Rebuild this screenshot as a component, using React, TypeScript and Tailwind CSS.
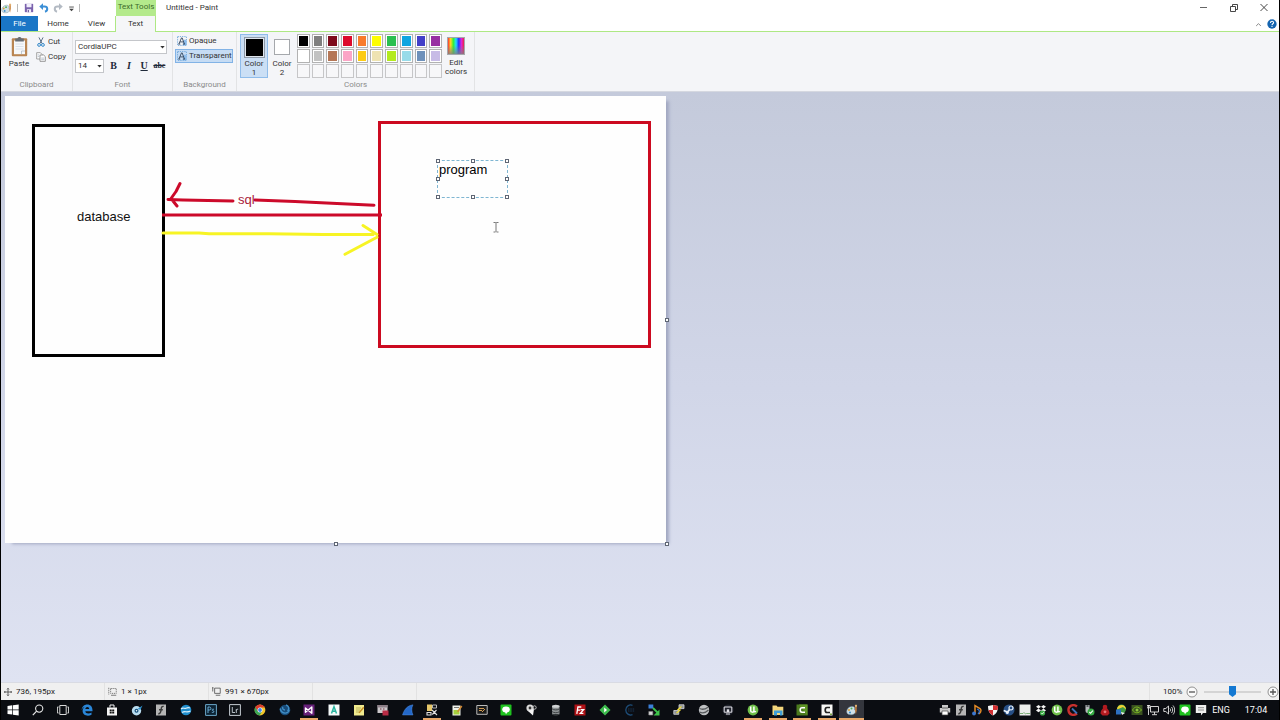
import React from "react";

type Kids = { children: React.ReactNode };

function Icon({ children, size = "size-3", box = "0 0 12 12" }: Kids & { size?: string; box?: string }) {
  return (
    <svg viewBox={box} className={`${size} shrink-0`} fill="none" aria-hidden="true">
      {children}
    </svg>
  );
}

/* ---------- shared drawings ---------- */

const palette = (
  <>
    <path d="M.8 8.200C.4 5.200 3 2.400 6 2.400c2.400 0 3 1.200 2.600 2.600-.3 1.100.9 1 .9 2.600 0 2-2 3.100-4.300 3.100S1 10 .8 8.200z" fill="#cfe0e8" stroke="#7a95a3" strokeWidth=".5" />
    <circle cx="3" cy="6" r="1" fill="#d9a23a" />
    <circle cx="5.500" cy="4.500" r="1" fill="#4fae57" />
    <circle cx="4" cy="8.600" r="1" fill="#3489c9" />
    <path d="M9.200 1.200h1.500v5.200l-.8 4.200-.8-4.200z" fill="#c9803a" />
    <path d="M8.900.8h2.100v2H8.900z" fill="#e0b070" />
  </>
);
const lineBubble = (
  <>
    <rect x=".5" y=".5" width="11" height="11" rx="1" fill="#1fc21f" />
    <ellipse cx="6" cy="5.400" rx="3.800" ry="3" fill="#fff" />
    <path d="M5 7.800l1 2.400 2-3z" fill="#fff" />
  </>
);
const utorrent = (
  <>
    <circle cx="6" cy="6" r="5.400" fill="#6fbf4a" />
    <path d="M3.700 2.500v4.200c0 1.700 2.900 2 3.200.3V2.500M6.900 6.500c.1 1.500 1.200 1.600 2 .8" stroke="#fff" strokeWidth="1.500" />
  </>
);
const flashDoc = (
  <>
    <rect x="1" y=".5" width="10" height="11" fill="#b5b5b5" />
    <path d="M8.700 2.400c-3-.3-2.200 2-2.700 4.200-.3 1.800-.7 3.300-2.700 3.100M4 5.800h3.800" stroke="#3a3a3a" strokeWidth="1.400" />
  </>
);

/* ---------- title bar ---------- */

function IconButton({ label, width, children }: Kids & { label: string; width: string }) {
  return (
    <button type="button" aria-label={label} className={`flex h-4 shrink-0 items-center justify-center ${width}`}>
      {children}
    </button>
  );
}

function TitleBar() {
  return (
    <header className="flex h-4 items-start bg-white">
      <div className="flex h-full w-[115px] shrink-0 items-center">
        <Icon size="size-[11px]">{palette}</Icon>
        <span className="ml-[5px] h-2 w-px bg-[#b8b8b8]" />
        <div className="ml-1 flex">
          <IconButton label="Save" width="w-[14px]">
            <Icon size="size-[10px]">
              <path d="M1 1h10v10H1z" fill="#7a62ad" />
              <path d="M3 1h6v4H3zM3.500 7.500h5V11h-5z" fill="#f1eefb" />
              <path d="M4.500 8.500h1.300V11H4.500z" fill="#5b4690" />
            </Icon>
          </IconButton>
          <IconButton label="Undo" width="w-[15px]">
            <Icon size="size-[10px]">
              <path d="M2.500 4.300h4.200c4 0 4.300 5 .5 6.200" stroke="#3b8fd6" strokeWidth="2.400" />
              <path d="M.3 4.300L4.800.300v8z" fill="#3b8fd6" />
            </Icon>
          </IconButton>
          <IconButton label="Redo" width="w-[14px]">
            <Icon size="size-[10px]">
              <path d="M9.500 4.300H5.300c-4 0-4.300 5-.5 6.200" stroke="#b3bac3" strokeWidth="2.400" />
              <path d="M11.700 4.300L7.200.300v8z" fill="#b3bac3" />
            </Icon>
          </IconButton>
          <IconButton label="Customize Quick Access Toolbar" width="w-[12px]">
            <Icon size="size-[7px]">
              <path d="M2 3.500h8" stroke="#444" strokeWidth="1.500" />
              <path d="M2 6.500h8L6 10.500z" fill="#444" />
            </Icon>
          </IconButton>
        </div>
        <span className="ml-[2px] h-2 w-px bg-[#b8b8b8]" />
      </div>
      <div className="flex h-full w-10 shrink-0 items-center justify-center bg-[#b4ea8c] pb-[2px] text-[#3d6b2a]">Text Tools</div>
      <h1 className="ml-[10px] flex h-full flex-1 items-center">Untitled - Paint</h1>
      <IconButton label="Minimize" width="w-[30px]">
        <Icon size="size-[10px]" box="0 0 10 10">
          <path d="M1 4.500h7" stroke="#666" />
        </Icon>
      </IconButton>
      <IconButton label="Restore" width="w-[30px]">
        <Icon size="size-[10px]" box="0 0 10 10">
          <path d="M1.500 3.500h5v5h-5zM3.500 3.500v-2h5v5h-2" stroke="#333" strokeWidth=".9" />
        </Icon>
      </IconButton>
      <IconButton label="Close" width="w-[30px]">
        <Icon size="size-[10px]" box="0 0 10 10">
          <path d="M1.500 1l7 7M8.500 1l-7 7" stroke="#333" strokeWidth=".9" />
        </Icon>
      </IconButton>
    </header>
  );
}

function Tabs() {
  return (
    <nav className="flex h-4 border-b border-[#aee884] bg-white">
      <button type="button" className="w-[37px] bg-[#1a76c6] text-white">File</button>
      <button type="button" className="w-10">Home</button>
      <button type="button" className="w-[37px]">View</button>
      <button type="button" aria-current="page" className="-mb-px w-[41px] border-x border-[#aee884] bg-[#f5f6f8]">Text</button>
      <span className="flex-1" />
      <IconButton label="Collapse the Ribbon" width="w-[14px]">
        <Icon size="size-[7px]">
          <path d="M2 8.500l4-4 4 4" stroke="#777" strokeWidth="1.500" />
        </Icon>
      </IconButton>
      <IconButton label="Help" width="w-[14px]">
        <Icon size="size-[10px]">
          <circle cx="6" cy="6" r="5.600" fill="#1565b0" />
          <path d="M4.200 4.700c0-2.600 3.700-2.400 3.700-.3C7.900 5.800 6 5.700 6 7.400M6 8.400v1.300" stroke="#fff" strokeWidth="1.300" />
        </Icon>
      </IconButton>
    </nav>
  );
}

/* ---------- ribbon ---------- */

function Group({ title, width, children }: Kids & { title: string; width: string }) {
  return (
    <section className={`flex shrink-0 flex-col border-r border-[#e2e3e5] ${width}`}>
      <div className="flex h-[48px]">{children}</div>
      <h2 className="text-center leading-3 text-[#8b8b8b]">{title}</h2>
    </section>
  );
}

const scissors = (
  <>
    <path d="M3.500.5l3.800 7.300M8.500.5L4.700 7.800" stroke="#5a6f86" strokeWidth="1.200" />
    <circle cx="3.700" cy="9.500" r="1.700" stroke="#2f86c8" strokeWidth="1.200" />
    <circle cx="8.300" cy="9.500" r="1.700" stroke="#2f86c8" strokeWidth="1.200" />
  </>
);
const copyIcon = (
  <>
    <path d="M.8.800h4.400l2 2v5.600H.8z" fill="#fff" stroke="#8a8a8a" strokeWidth=".9" />
    <path d="M4.800 3.600h4.400l2 2v5.600H4.800z" fill="#fff" stroke="#7a7a7a" strokeWidth=".9" />
    <path d="M6.200 7.300H10M6.200 9.200H10M2 3.500h2M2 5.500h2" stroke="#9aa7b8" strokeWidth=".8" />
  </>
);
const textFill = (
  <>
    <path d="M.7.700h10.600v10.600H.7z" stroke="#5b9bd5" strokeWidth="1" strokeDasharray="1.500 1.200" />
    <path d="M8 4.500h3.500v7H7z" fill="#8cbcec" />
    <path d="M2.300 9.600L5.400 2.300h.8l2.700 7.300M3.600 7.100h4M1.700 9.700h2.200M7 9.700h2.800" stroke="#33475f" strokeWidth="1.100" />
  </>
);

function SmallButton({ icon, label }: { icon: React.ReactNode; label: string }) {
  return (
    <button type="button" className="flex h-[15px] items-center gap-[2px]">
      <Icon size="size-[10px]">{icon}</Icon>
      {label}
    </button>
  );
}

function Clipboard() {
  return (
    <Group title="Clipboard" width="w-[72px]">
      <button type="button" className="ml-[6px] flex w-6 flex-col items-center pt-1">
        <svg viewBox="0 0 17 21" className="h-[21px] w-[17px] shrink-0" fill="none" aria-hidden="true">
          <rect x=".8" y="2.200" width="15.400" height="18" rx="1" fill="#b98552" />
          <path d="M3 4.500h11v13.700H3z" fill="#f6f8fa" />
          <path d="M10.500 18.200V15H14" stroke="#a9b4bf" strokeWidth=".7" />
          <path d="M4.500 8h8M4.500 10.500h8M4.500 13h8" stroke="#cdd7e2" strokeWidth=".7" />
          <path d="M4.200 2.400h2.300c.3-2 3.700-2 4 0h2.300v3H4.200z" fill="#676d74" />
        </svg>
        <span className="leading-[13px]">Paste</span>
      </button>
      <div className="ml-[5px] flex flex-col pt-[2px]">
        <SmallButton icon={scissors} label="Cut" />
        <SmallButton icon={copyIcon} label="Copy" />
      </div>
    </Group>
  );
}

function Picker({ label, value, width }: { label: string; value: string; width: string }) {
  return (
    <div className={`relative h-[14px] ${width}`}>
      <select
        aria-label={label}
        defaultValue={value}
        className="block h-full w-full appearance-none border border-[#c4c6ca] bg-white pl-[2px] leading-3"
      >
        <option>{value}</option>
      </select>
      <svg viewBox="0 0 5 3" className="pointer-events-none absolute top-[6px] right-[2px] h-[3px] w-[5px]" aria-hidden="true">
        <path d="M.3 0h4.400L2.500 2.600z" fill="#333" />
      </svg>
    </div>
  );
}

function FontGroup() {
  return (
    <Group title="Font" width="w-[100px]">
      <div className="flex flex-1 flex-col gap-[5px] pt-2 pr-[5px] pl-[2px]">
        <Picker label="Font family" value="CordiaUPC" width="w-full" />
        <div className="flex items-center">
          <Picker label="Font size" value="14" width="w-[29px]" />
          <div className="ml-[2px] grid flex-1 grid-cols-4 text-center font-['Liberation_Serif',serif] text-[10px] leading-[14px] font-bold text-[#1f2a3a]">
            <button type="button" aria-label="Bold">B</button>
            <button type="button" aria-label="Italic" className="italic">I</button>
            <button type="button" aria-label="Underline" className="underline">U</button>
            <button type="button" aria-label="Strikethrough" className="text-[8px] line-through">abc</button>
          </div>
        </div>
      </div>
    </Group>
  );
}

function Background() {
  return (
    <Group title="Background" width="w-[64px]">
      <div className="flex flex-1 flex-col gap-px pt-[2px] pr-[3px] pl-[2px]">
        <button type="button" className="flex h-[14px] items-center gap-[2px] border border-transparent pl-px">
          <Icon size="size-[10px]">{textFill}</Icon>Opaque
        </button>
        <button type="button" aria-pressed="true" className="flex h-[14px] items-center gap-[2px] border border-[#82b3e6] bg-[#c6dcf4] pl-px">
          <Icon size="size-[10px]">{textFill}</Icon>Transparent
        </button>
      </div>
    </Group>
  );
}

const swatches: [string, string][] = [
  ["Black", "bg-black"], ["Gray", "bg-[#7f7f7f]"], ["Dark red", "bg-[#7d0a1b]"], ["Red", "bg-[#dc0a2c]"], ["Orange", "bg-[#f87b2c]"],
  ["Yellow", "bg-[#fdfd02]"], ["Green", "bg-[#2abf50]"], ["Turquoise", "bg-[#0fa5e0]"], ["Indigo", "bg-[#423fc8]"], ["Purple", "bg-[#972fa2]"],
  ["White", "bg-white"], ["Light gray", "bg-[#c2c2c2]"], ["Brown", "bg-[#b57757]"], ["Rose", "bg-[#fba5c6]"], ["Gold", "bg-[#fccb14]"],
  ["Light yellow", "bg-[#eee3b2]"], ["Lime", "bg-[#b3ea1e]"], ["Light turquoise", "bg-[#98dbe9]"], ["Blue-gray", "bg-[#6e91bb]"], ["Lavender", "bg-[#c7bbe6]"],
];
const customSlots = [1, 2, 3, 4, 5, 6, 7, 8, 9, 10];

function Colors() {
  return (
    <Group title="Colors" width="w-[238px]">
      <div className="flex pt-[2px] pl-[3px]">
        <button type="button" aria-pressed="true" className="flex h-[44px] w-7 flex-col items-center border border-[#8fbcea] bg-[#cbdff5] pt-[2px] leading-[9px]">
          <span className="mb-px size-[21px] shrink-0 border border-[#8e9aa8] bg-black ring-1 ring-[#dfe6ee] ring-inset" />
          Color<br />1
        </button>
        <button type="button" className="flex h-[44px] w-7 flex-col items-center pt-[5px] leading-[9px]">
          <span className="mb-1 size-4 shrink-0 border border-[#a5a8ac] bg-white" />
          Color<br />2
        </button>
        <div className="ml-px grid w-[145px] grid-cols-10 content-start gap-x-[2px] gap-y-px">
          {swatches.map(([name, fill]) => (
            <button key={name} type="button" aria-label={name} className="h-[14px] border border-[#b2b2b2] bg-white p-px">
              <span className={`block h-full ${fill}`} />
            </button>
          ))}
          {customSlots.map((n) => (
            <button key={n} type="button" aria-label={`Custom color ${n}`} className="h-[14px] border border-[#c6c6c8] bg-[#f7f7f9]" />
          ))}
        </div>
        <button type="button" className="ml-px flex w-[26px] flex-col items-center pt-[3px] leading-[9px]">
          <span className="mb-[3px] size-[18px] shrink-0 border border-[#a5a8ac] bg-[linear-gradient(to_bottom,transparent_45%,#808080cc),linear-gradient(to_right,#f33,#fd2,#3e3,#2df,#23f,#d2d,#e24)]" />
          Edit<br />colors
        </button>
      </div>
    </Group>
  );
}

/* ---------- canvas ---------- */

const handles = [
  "-top-[2px] -left-[2px]", "-top-[2px] left-[33px]", "-top-[2px] -right-[2px]",
  "top-4 -left-[2px]", "top-4 -right-[2px]",
  "-bottom-[2px] -left-[2px]", "-bottom-[2px] left-[33px]", "-bottom-[2px] -right-[2px]",
];

function Handle({ at }: { at: string }) {
  return <span className={`absolute size-1 border border-[#5f6674] bg-white ${at}`} />;
}

function Canvas() {
  return (
    <div className="relative w-[661px] bg-[#fefefe] shadow-[5px_3px_3px_-2px_#a2a8c2]">
      <svg viewBox="0 0 661 447" className="block w-full font-['Liberation_Sans',sans-serif] text-[13px]" fill="none" role="img" aria-label="Drawing">
        <rect x="28.500" y="29.500" width="130" height="230" stroke="#000" strokeWidth="3" />
        <rect x="374.500" y="26.500" width="270" height="224" stroke="#cc0a20" strokeWidth="3" />
        <path d="M157 119h220" stroke="#cc0a2a" strokeWidth="3" />
        <g stroke="#cc0a2a" strokeWidth="3" strokeLinecap="round" strokeLinejoin="round">
          <path d="M163 103.500l15 .5 50 1M175 87.500l-4 8-5 7 6 7.500M250 104l40 1.500 42 2 37 1.800" />
        </g>
        <path d="M158 137h36l10 .8h60l54 .7h50M358 129.500l14 9M340 158.300l32-17" stroke="#f7f424" strokeWidth="3" strokeLinecap="round" strokeLinejoin="round" />
        <text x="72" y="125" fill="#111">database</text>
        <text x="233" y="108" fill="#a81838">sql</text>
        <path d="M488.500 126.500h2l.5.500.5-.5h2M491 127v8M488.500 136h2l.5-.500.5.500h2" stroke="#555" strokeWidth=".8" />
      </svg>
      <div className="absolute top-16 left-[432px] h-[38px] w-[71px] border border-dashed border-[#7fb6d2]">
        <textarea aria-label="Text on canvas" defaultValue="program" className="block h-full w-full resize-none overflow-hidden bg-transparent pl-px font-['Liberation_Sans',sans-serif] text-[13px] leading-[18px] text-black outline-none" />
        {handles.map((at) => <Handle key={at} at={at} />)}
      </div>
      <Handle at="top-[222px] -right-[3px]" />
      <Handle at="-right-[3px] -bottom-[3px]" />
      <Handle at="-bottom-[3px] left-[329px]" />
    </div>
  );
}

/* ---------- status bar ---------- */

function StatusCell({ children }: { children?: React.ReactNode }) {
  return <div className="flex w-[104px] shrink-0 items-center gap-1 border-r border-[#e2e2e2] pl-[3px]">{children}</div>;
}

function StatusBar() {
  return (
    <footer className="flex h-[18px] border-t border-[#d9dbe3] bg-[#f0f0f0] text-[#222]">
      <StatusCell>
        <Icon size="size-2">
          <path d="M6 .5v11M.5 6h11M4.500 2L6 .5 7.500 2M4.500 10L6 11.500 7.500 10M2 4.500L.5 6 2 7.500M10 4.500L11.500 6 10 7.500" stroke="#333" strokeWidth="1.100" />
        </Icon>
        736, 195px
      </StatusCell>
      <StatusCell>
        <Icon size="size-[9px]">
          <path d="M1 1v9M3.500 2h7.500v6.500H3.500z" stroke="#555" strokeDasharray="1.600 1" />
          <path d="M4 11h7" stroke="#555" />
        </Icon>
        1 × 1px
      </StatusCell>
      <StatusCell>
        <Icon size="size-[9px]">
          <path d="M1 1v5M0 1h2M3.500 1.500h7.500v7H3.500zM5 11h6" stroke="#444" />
        </Icon>
        991 × 670px
      </StatusCell>
      <StatusCell />
      <div className="flex-1 border-r border-[#e2e2e2]" />
      <div className="flex shrink-0 items-center pl-[13px]">
        <label htmlFor="zoom" className="w-[23px]">100%</label>
        <button type="button" aria-label="Zoom out">
          <Icon><circle cx="6" cy="6" r="5" fill="#fafafa" stroke="#777" strokeWidth=".8" /><path d="M3 6h6" stroke="#555" strokeWidth="1.300" /></Icon>
        </button>
        <input
          id="zoom"
          type="range"
          min="0"
          max="100"
          defaultValue="50"
          className="mx-[6px] h-3 w-[57px] appearance-none bg-[linear-gradient(#d4d4d4,#d4d4d4)] bg-[length:100%_2px] bg-center bg-no-repeat [&::-webkit-slider-thumb]:h-[11px] [&::-webkit-slider-thumb]:w-[7px] [&::-webkit-slider-thumb]:appearance-none [&::-webkit-slider-thumb]:bg-[#1479d2] [&::-webkit-slider-thumb]:[clip-path:polygon(0_0,100%_0,100%_75%,50%_100%,0_75%)]"
        />
        <button type="button" aria-label="Zoom in">
          <Icon><circle cx="6" cy="6" r="5" fill="#fafafa" stroke="#777" strokeWidth=".8" /><path d="M3 6h6M6 3v6" stroke="#555" strokeWidth="1.300" /></Icon>
        </button>
      </div>
    </footer>
  );
}

/* ---------- taskbar ---------- */

type App = { name: string; open?: boolean; active?: boolean; art: React.ReactNode };

const apps: App[] = [
  { name: "Start", art: <path d="M.5 2l4.800-.7v4.300H.5zM6 1.200l5.700-.8v5.200H6zM.5 6.300h4.800v4.300L.5 10zM6 6.300h5.700v5.300L6 10.800z" fill="#fff" /> },
  { name: "Search", art: <><circle cx="7.200" cy="4.600" r="3.600" stroke="#e8e8e8" strokeWidth="1.100" /><path d="M4.600 7.200L.8 11.200" stroke="#e8e8e8" strokeWidth="1.200" /></> },
  { name: "Task View", art: <path d="M2.800 1.500h6.400v9H2.800zM1.600 3H.4v6h1.200M10.400 3h1.200v6h-1.200" stroke="#d8d8d8" /> },
  { name: "Edge", art: <path d="M.6 6C1 2.600 3.200.5 6.200.5c3.400 0 5.300 2.300 5.300 6v.7H4.300c.2 2.500 3.700 2.900 6.200 1.300v2.300C6.400 12.800 1.600 11.200 1.600 7c0-2 1-3.600 2.900-4.400C3.200 2.900 1.600 4 .6 6zm3.700-1h3.900c0-2.800-3.600-2.700-3.900 0z" fill="#2a86d8" /> },
  { name: "Store", art: <><path d="M1 3.500h10v8H1z" fill="#f4f4f4" /><path d="M4 3.500V1h4v2.500" stroke="#f4f4f4" /><path d="M3.700 5.500h2v1.700h-2zM6.200 5.500h2v1.700h-2zM3.700 7.700h2v1.700h-2zM6.200 7.700h2v1.700h-2z" fill="#111" /></> },
  { name: "Media player", art: <><circle cx="5.500" cy="6.700" r="4.700" fill="#b9dcef" /><circle cx="5.500" cy="6.700" r="2" fill="#14507c" /><path d="M6.500 5l5-3.600-2 4.300z" fill="#2f8fcb" /><circle cx="5.500" cy="6.700" r=".8" fill="#fff" /></> },
  { name: "Editor", art: flashDoc },
  { name: "OpenOffice", art: <><circle cx="6" cy="6" r="5.300" fill="#1f8dcc" /><path d="M1 5c2-2 3 0 5-.8C8 3.300 9 3.500 10 4M2 8.500c3-2 4.500.5 8.500-1.500" stroke="#d7eefa" strokeWidth="1.200" /></> },
  { name: "Photoshop", art: <><path d="M.6.600h10.800v10.800H.6z" fill="#0b2233" stroke="#6aa6c8" /><path d="M3 9V3h1.400c2 0 2 3 0 3H3M9 5.400c-2.200-.8-2.400 1-.9 1.400 1.500.5 1 2.200-1.300 1.500" stroke="#73b8e0" strokeWidth=".9" /></> },
  { name: "Lightroom", art: <><path d="M.6.600h10.800v10.800H.6z" fill="#10151a" stroke="#c4ccd2" /><path d="M3.300 3v5.500H6M7.300 5v4M7.300 6.500c.3-1 1-1.400 1.900-1.300" stroke="#c9d3da" strokeWidth=".9" /></> },
  { name: "Chrome", art: <><circle cx="6" cy="6" r="5.400" fill="#f3c62b" /><path d="M1.300 3.300a5.400 5.400 0 019.500.2H6L3.700 7.500z" fill="#dc3b2d" /><path d="M1.300 3.300A5.400 5.400 0 005.500 11.400L8.200 7.300H3.800z" fill="#3aa757" /><circle cx="6" cy="6" r="2.500" fill="#fff" /><circle cx="6" cy="6" r="1.900" fill="#3f83ea" /></> },
  { name: "Firefox Developer", art: <><circle cx="6" cy="6" r="5.300" fill="#174a78" /><path d="M1.200 4.500c1 5 7 6.500 9 1.500M7 1c3 1 3.500 4 1.500 6M4 3c-1 1.200 0 3 2 3" stroke="#3f8cc4" strokeWidth="1.400" /></> },
  { name: "Visual Studio", open: true, art: <><path d="M.5.500h11v11H.5z" fill="#68217a" /><path d="M2.500 4v4.200L8.800 3v6.200z" stroke="#fff" strokeWidth="1.400" strokeLinejoin="round" /></> },
  { name: "Android tool", art: <><path d="M.5.500h11v11H.5z" fill="#f7fbfa" /><path d="M3.500 9.500L6 2.700l2.500 6.800M4.300 7.300h3.400" stroke="#2bb5a0" strokeWidth="1.500" /></> },
  { name: "Notes", art: <><path d="M1 1h10v10.500H1z" fill="#f1ea8e" /><path d="M3 4h5M3 6h4M3 8h3" stroke="#a39c4c" strokeWidth=".7" /><path d="M5.500 8.500l4.600-5.700 1.200 1L6.700 9.300z" fill="#c28b26" /></> },
  { name: "Mail", art: <><path d="M.5 1h10v8H.5z" fill="#ccc8cb" /><path d="M.5 1h10v2.500H.5z" fill="#8d7f88" /><path d="M5.500 6.500h6v5h-6z" fill="#b92b45" /><path d="M3 5h1.500M6 5h1.500" stroke="#734" /></> },
  { name: "Wireshark", art: <path d="M.5 11C2 5.500 5.500 1.500 11 .8 9.300 4 9.600 7.800 11 11z" fill="#2468c8" stroke="#5b9af0" strokeWidth=".4" /> },
  { name: "Tools", open: true, art: <><path d="M1 .5h5v6.500H1z" fill="#e6c76a" /><path d="M6.500 1h4v3h-4z" stroke="#b8b8b8" /><path d="M1 8.500h4v2.500H1zM6 6l5 5M10.500 6L6.300 10.500" stroke="#e1e1e1" strokeWidth="1.100" /></> },
  { name: "Notepad++", art: <><path d="M1.500 1.500h8v10h-8z" fill="#f0f3ea" /><path d="M2.500 6h6v4.500h-6z" fill="#a5cf3c" /><path d="M3 3.500h5" stroke="#777" /><path d="M6 7.500l4-6 1.400 1L7.200 8.200z" fill="#d08832" /></> },
  { name: "Terminal", art: <><path d="M.8 1.500h10.400v8.800H.8z" fill="#1b1b1b" stroke="#bababa" /><path d="M3 4.500h5M3 6.500h3M6 8l3-3" stroke="#d19a52" /></> },
  { name: "LINE", art: lineBubble },
  { name: "Audio", art: <><circle cx="5" cy="4" r="3.600" fill="#dadada" /><path d="M3 7l5 4.500 1-6.500z" fill="#f3f3f3" /><circle cx="5" cy="4" r="1.400" fill="#333" /><circle cx="9.500" cy="3.500" r="1.700" stroke="#bbb" /></> },
  { name: "Database", art: <><path d="M2 2.200h7.500v8H2z" fill="#8b8f91" /><ellipse cx="5.800" cy="2.200" rx="3.800" ry="1.500" fill="#d0d3d4" /><path d="M2 4.800c2 1.500 5.500 1.500 7.500 0M2 7.600c2 1.500 5.500 1.500 7.500 0M2 10c2 1.500 5.500 1.500 7.500 0" stroke="#3f4345" /></> },
  { name: "FileZilla", art: <><path d="M.5.500h11v11H.5z" fill="#b01217" /><path d="M2.800 9.800L3.900 3h3.400M3.300 6.200h2.900M6.600 5.600h3L6.300 9.300h3.100" stroke="#fff" strokeWidth="1.300" /></> },
  { name: "Git", art: <><path d="M6 .5L11.500 6 6 11.500.5 6z" fill="#3dbb4d" /><path d="M5.200 3.500v5L8 6z" fill="#fff" /></> },
  { name: "Eclipse", art: <><path d="M8.500 1.300A5 5 0 108.500 10.700" stroke="#1d4d78" strokeWidth="1.300" /><path d="M4 5h7M4 7h7" stroke="#1f4163" strokeWidth=".8" strokeDasharray="1.500 .8" /></> },
  { name: "Remote copy", art: <><path d="M.5.500h4.800v4H.5z" fill="#3a7fd8" /><path d="M.8 7.500h4v3.500h-4z" fill="#d7d7d7" stroke="#888" strokeWidth=".6" /><path d="M5 4l4.500 4.500" stroke="#3dc44a" strokeWidth="1.800" /><path d="M11.500 5.500v6h-6z" fill="#3dc44a" /></> },
  { name: "PuTTY", art: <><path d="M6 .8h5v3.800H6zM.8 6.500h5v3.800h-5z" fill="#8d9297" stroke="#d9d9d9" strokeWidth=".8" /><path d="M8.500 2.500L5 5.500l2.200.5L3.500 9" stroke="#f2df39" strokeWidth="1.100" /></> },
  { name: "Sphere", art: <><circle cx="6" cy="6" r="5.200" fill="#bfc1c3" /><path d="M1.500 4.500c3 1.500 6 .5 8.500-1.300M1.500 8c3 1.500 6.500.5 9-2" stroke="#56595c" strokeWidth="1.300" /></> },
  { name: "Remote Desktop", art: <><circle cx="6" cy="6" r="5.500" fill="#20222c" /><path d="M2.200 3h7.600v5.200H2.200zM4 10h4" stroke="#e4e4ea" /><path d="M4.800 5.300h2.400V8H4.800z" fill="#e4e4ea" /></> },
  { name: "uTorrent", open: true, art: utorrent },
  { name: "File Explorer", open: true, art: <><path d="M.5 1.500h4l1 1.300h5.800V11H.5z" fill="#f3d67c" /><path d="M2 6.500h8.500V11.500H8V9H5v2.500H2z" fill="#3f9fd9" /></> },
  { name: "Camtasia Studio", open: true, art: <><path d="M.5.500h11v11H.5z" fill="#4b7a1e" /><path d="M3 .5h8.500v11z" fill="#5f9526" /><path d="M9 3.800H6c-2.400 0-2.400 4.400 0 4.400h3" stroke="#fff" strokeWidth="1.600" /></> },
  { name: "Camtasia Recorder", open: true, art: <><path d="M.5.500h11v11H.5z" fill="#f7f7f4" /><path d="M9 3.500H6c-2.400 0-2.400 5 0 5h3" stroke="#222" strokeWidth="1.700" /><path d="M9 9.500h2v1.500H9z" fill="#7aa642" /></> },
  { name: "Paint", open: true, active: true, art: palette },
];

const tray: { name: string; art: React.ReactNode }[] = [
  { name: "Printer", art: <><path d="M3 1h6v3H3zM.8 4h10.400v4.500H.8z" fill="#c9c9c9" /><path d="M3 4h6" stroke="#444" strokeWidth=".8" /><path d="M3 7h6v4H3z" fill="#fff" stroke="#444" strokeWidth=".7" /></> },
  { name: "Editor agent", art: flashDoc },
  { name: "Music", art: <><path d="M4 9.500V1.500l5 3c2 2 .5 4-1 5.500" stroke="#e48b27" strokeWidth="1.500" /><circle cx="3" cy="9.500" r="1.900" fill="#3c78d0" /><path d="M6 5c3 1 3 3 1 5" stroke="#3c78d0" strokeWidth="1.200" /></> },
  { name: "Shield", art: <><path d="M1 2l5-1 5 1c0 5-1.500 7.500-5 9.500C2.500 9.500 1 7 1 2z" fill="#f4f4f4" /><path d="M6 1l5 1c0 1.500-.1 2.800-.5 4H6zM1.500 6H6v5.500C3.500 10 2 8.500 1.500 6z" fill="#d12e31" /></> },
  { name: "Steam", art: <><circle cx="6" cy="6" r="5.500" fill="#274f86" /><circle cx="8" cy="4" r="2" fill="#274f86" stroke="#e9f1fa" strokeWidth="1.200" /><path d="M.7 6.500L4.500 8l2-2.300" stroke="#e9f1fa" strokeWidth="1.800" /><circle cx="4.300" cy="8.500" r="1.500" fill="#e9f1fa" /></> },
  { name: "Monitor", art: <><path d="M.5.500h11v11H.5z" fill="#eceeec" /><path d="M1 9.500h3l1-1 1.500 1.500 1-.5H11" stroke="#6fa66b" strokeWidth=".9" /></> },
  { name: "Dropbox", art: <><path d="M3.500 1L6 2.800 3.500 4.600 1 2.800zM8.500 1L11 2.800 8.500 4.600 6 2.800zM3.500 4.600L6 6.400 3.500 8.200 1 6.400zM8.500 4.600L11 6.400 8.500 8.200 6 6.400z" fill="#f3f3f3" /><circle cx="7.500" cy="9" r="2.600" fill="#3fae49" /><path d="M6.300 9l1 1 1.500-1.800" stroke="#fff" strokeWidth=".8" /></> },
  { name: "uTorrent", art: utorrent },
  { name: "CCleaner", art: <><path d="M10 2.500C6-.5 1 2 1.500 6.500S7 12 10 9.500" stroke="#c8302e" strokeWidth="2.400" /><path d="M5 4.500l5 5" stroke="#3c72b8" strokeWidth="1.800" /></> },
  { name: "Safely remove hardware", art: <><path d="M2.500 1h4v6a2 2 0 01-4 0z" fill="#b6babd" /><path d="M3.500 1h2v2h-2z" fill="#5b5f62" /><circle cx="8" cy="8" r="3.500" fill="#35aa43" /><path d="M6.300 8l1.300 1.300 2.200-2.600" stroke="#fff" strokeWidth="1.100" /></> },
  { name: "Red agent", art: <><circle cx="6" cy="3" r="2.300" fill="#b21a20" /><path d="M6 3.500c2 0 4.500 3 4.500 6l-2 2h-5l-2-2c0-3 2.500-6 4.500-6z" fill="#b21a20" /><circle cx="6" cy="7.800" r="1.400" fill="#e8797c" /></> },
  { name: "Download manager", art: <><circle cx="6.500" cy="5" r="4.500" fill="#3e9b45" /><path d="M2 5.500a4.500 4.500 0 019 0L8 3z" fill="#f2cf33" /><path d="M1 5.500h5v5H1z" fill="#2d6fc0" /><path d="M6 8l4 1-3 2z" fill="#eee" /></> },
  { name: "NVIDIA", art: <><path d="M.5 1h11v10H.5z" fill="#3a5220" /><path d="M1.500 6c2.500-4 6-4 9 0-3 3.700-6.500 3.700-9 0z" stroke="#7dbb22" strokeWidth="1" /><circle cx="6" cy="6" r="1.500" fill="#8cc63f" /></> },
  { name: "Network", art: <path d="M3.500 2.500h8v5.500h-8zM7.500 8v2.500M5 10.700h5M1.500 1v10M0 1.500h3v2.300H0z" stroke="#e6e6e6" strokeWidth=".9" /> },
  { name: "Volume", art: <path d="M.8 4.500h2L5.500 2v8L2.800 7.500h-2zM7 4.500c.8 1 .8 2 0 3M8.500 3c1.600 2 1.600 4 0 6M10 1.500c2.300 3 2.300 6 0 9" stroke="#e8e8e8" strokeWidth=".9" /> },
  { name: "LINE", art: lineBubble },
  { name: "Action Center", art: <><path d="M.8 1h10.400v8H8l-2 2.500V9H.8z" fill="#efefef" /><path d="M3 3.700h6M3 6h6" stroke="#777" strokeWidth=".8" /></> },
];

function Taskbar() {
  return (
    <div className="flex h-5 items-stretch bg-[#0b0d12] text-white">
      <div className="grid w-[863px] grid-cols-[repeat(35,minmax(0,1fr))]">
        {apps.map((app) => (
          <button
            key={app.name}
            type="button"
            aria-label={app.name}
            className={`flex flex-col items-center pt-1 ${app.active ? "bg-[#34363d]" : ""}`}
          >
            <Icon>{app.art}</Icon>
            {app.open && <span className={`mt-[2px] h-[2px] shrink-0 bg-[#e9a768] ${app.active ? "w-full" : "w-[18px]"}`} />}
          </button>
        ))}
      </div>
      <div className="ml-auto flex items-center text-[9px]">
        {tray.map((item) => (
          <button key={item.name} type="button" aria-label={item.name} className="flex w-4 justify-center">
            <Icon>{item.art}</Icon>
          </button>
        ))}
        <button type="button" className="w-6 text-center">ENG</button>
        <time className="w-[46px] text-center">17:04</time>
      </div>
    </div>
  );
}

export default function App() {
  return (
    <div className="flex min-h-screen flex-col border-x border-black bg-white font-[Roboto,'Open_Sans',sans-serif] text-[8px] leading-3 text-[#333]">
      <TitleBar />
      <Tabs />
      <div className="flex h-[60px] border-b border-[#d5d8e0] bg-[#f4f5f8]">
        <Clipboard />
        <FontGroup />
        <Background />
        <Colors />
      </div>
      <main className="flex flex-1 items-start bg-linear-to-b from-[#c4cadb] via-[#d1d6e8] to-[#dfe3f2] pt-1 pl-1">
        <Canvas />
      </main>
      <StatusBar />
      <Taskbar />
    </div>
  );
}
